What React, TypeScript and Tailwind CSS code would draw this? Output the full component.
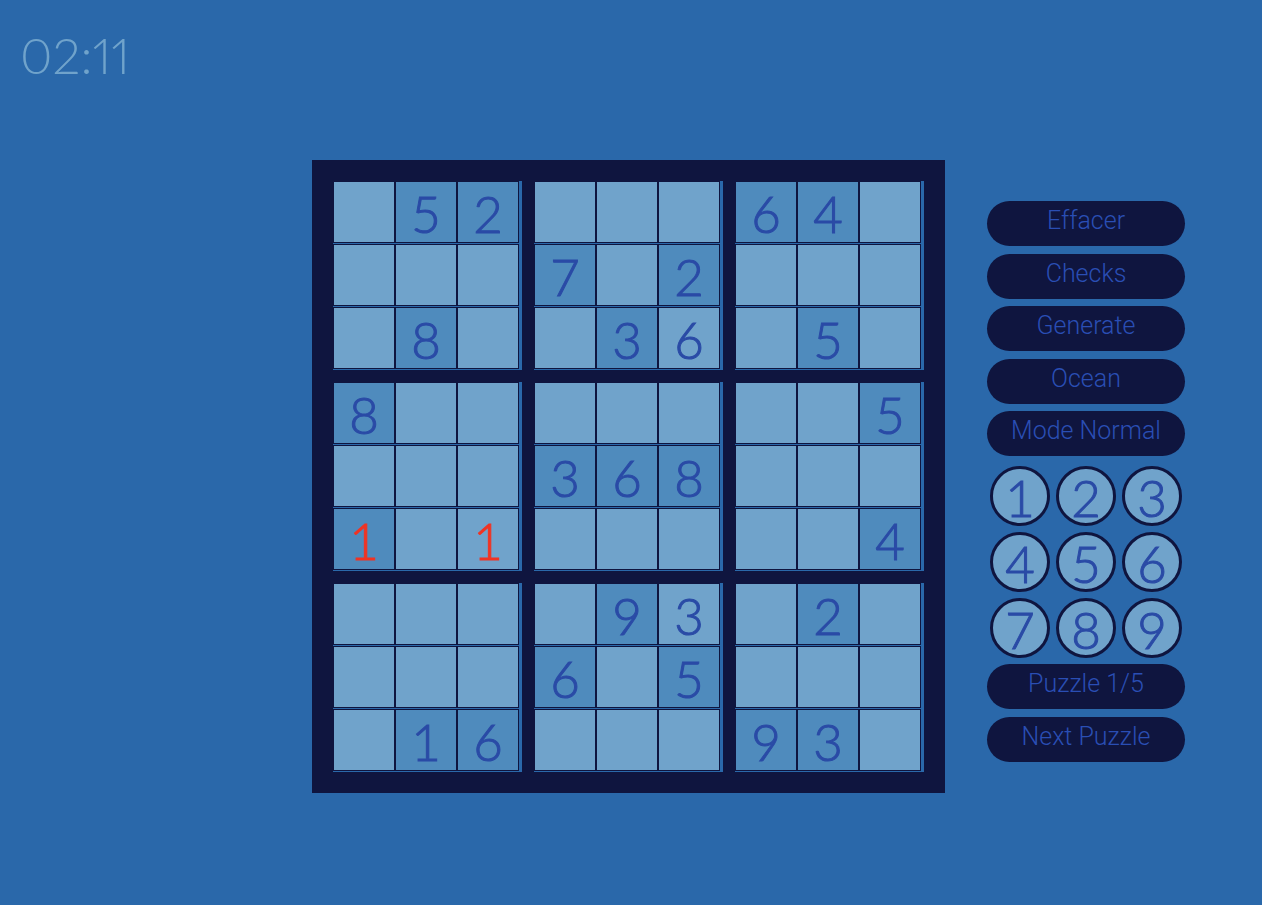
type Cell = { value: string; kind: "empty" | "given" | "player"; wrong?: boolean };

// One string per row: digits are givens, letters stand for digits entered by the player.
const rows = [
  ".52...64.",
  "...7.2...",
  ".8..3F.5.",
  "8.......5",
  "...368...",
  "1.A.....4",
  "....9C.2.",
  "...6.5...",
  ".16...93.",
];

const wrongCells = ["5-0", "5-2"];

function cellAt(row: number, col: number): Cell {
  const ch = rows[row][col];
  const wrong = wrongCells.includes(`${row}-${col}`);
  if (ch === ".") return { value: "", kind: "empty" };
  if (ch >= "A") return { value: String(ch.charCodeAt(0) - 64), kind: "player", wrong };
  return { value: ch, kind: "given", wrong };
}

const three = [0, 1, 2];

function Square({ row, col }: { row: number; col: number }) {
  const cell = cellAt(row, col);
  return (
    <button
      type="button"
      aria-label={`Row ${row + 1}, column ${col + 1}${cell.value ? `: ${cell.value}` : ""}`}
      className={`flex size-[62px] items-center justify-center border border-[#0f153f] pt-0.5 font-['Lato',sans-serif] text-[51px] leading-none font-light [-webkit-text-stroke:1px_currentColor] ${
        cell.kind === "given" ? "bg-[#4f8bbd]" : "bg-[#70a3cb]"
      } ${cell.wrong ? "text-[#f03424]" : "text-[#2a4ba6]"}`}
    >
      {cell.value}
    </button>
  );
}

function Block({ row, col }: { row: number; col: number }) {
  return (
    <div className="flex flex-col gap-px bg-[#2a68aa] pr-[3px] pb-px">
      {three.map((r) => (
        <div key={r} className="flex">
          {three.map((c) => (
            <Square key={c} row={row * 3 + r} col={col * 3 + c} />
          ))}
        </div>
      ))}
    </div>
  );
}

function Pill({ label }: { label: string }) {
  return (
    <button
      type="button"
      className="h-[45px] w-full rounded-full bg-[#0f153f] pb-1.5 font-['Roboto',sans-serif] text-[25px] leading-none font-light text-[#2a4eb4]"
    >
      {label}
    </button>
  );
}

export default function App() {
  return (
    <div className="min-h-screen bg-[#2a68aa] font-['Lato',sans-serif]">
      <header className="h-40 px-5 pt-7">
        <time className="block text-[50px] leading-[54px] font-light proportional-nums text-[#70a3cb]">02:11</time>
      </header>
      <main className="grid grid-cols-[1fr_auto_1fr] items-start pr-[5px]">
        <section aria-label="Sudoku" className="col-start-2 grid grid-cols-3 gap-3 bg-[#0f153f] p-[21px]">
          {three.map((r) => three.map((c) => <Block key={`${r}${c}`} row={r} col={c} />))}
        </section>
        <aside className="ml-[42px] flex w-[198px] flex-col pt-[41px]">
          <div className="flex h-[255px] flex-col justify-between">
            {["Effacer", "Checks", "Generate", "Ocean", "Mode Normal"].map((l) => (
              <Pill key={l} label={l} />
            ))}
          </div>
          <div className="mt-2.5 mb-1.5 grid grid-cols-3 gap-1.5 px-[3px]">
            {["1", "2", "3", "4", "5", "6", "7", "8", "9"].map((n) => (
              <button
                key={n}
                type="button"
                className="flex size-[60px] items-center justify-center rounded-full border-3 border-[#0f153f] bg-[#70a3cb] pt-0.5 font-['Lato',sans-serif] text-[51px] leading-none font-light text-[#2a4ba6] [-webkit-text-stroke:1px_currentColor]"
              >
                {n}
              </button>
            ))}
          </div>
          <div className="flex flex-col gap-2">
            <Pill label="Puzzle 1/5" />
            <Pill label="Next Puzzle" />
          </div>
        </aside>
      </main>
    </div>
  );
}
